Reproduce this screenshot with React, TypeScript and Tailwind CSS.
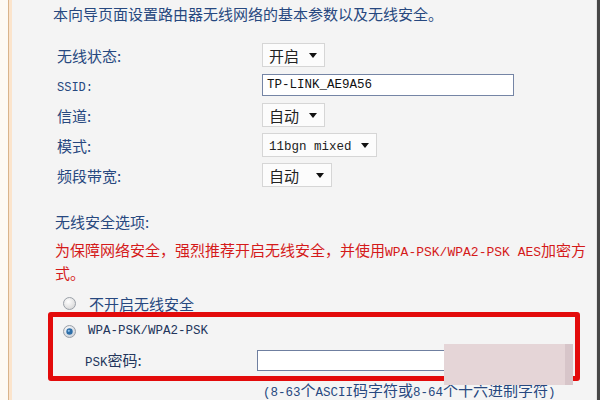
import React from "react";

const cjk = { fontFamily: '"Noto Sans CJK SC", "Noto Sans", sans-serif' };

function Mono({ children, size = "text-[12.5px]" }: { children: React.ReactNode; size?: string }) {
  return (
    <span className={size} style={{ fontFamily: '"Liberation Mono", "DejaVu Sans Mono", monospace' }}>
      {children}
    </span>
  );
}

function Arrow() {
  return (
    <svg width="8" height="5" viewBox="0 0 8 5" className="shrink-0">
      <path d="M0 0 H8 L4 5 Z" fill="#111" />
    </svg>
  );
}

function Select({ w, children }: { w: string; children: React.ReactNode }) {
  return (
    <div
      className={`${w} h-[24px] border border-[#d6d6d6] bg-[#fcfcfc] flex items-center justify-between pl-[6px] pr-[7px] text-[15px] text-[#222]`}
    >
      <span className="leading-none">{children}</span>
      <Arrow />
    </div>
  );
}

function Radio({ checked }: { checked?: boolean }) {
  return (
    <svg width="13" height="13" viewBox="0 0 13 13" className="shrink-0">
      <defs>
        <radialGradient id={checked ? "rgc" : "rgu"} cx="0.4" cy="0.35" r="0.7">
          <stop offset="0" stopColor="#ffffff" />
          <stop offset="1" stopColor={checked ? "#c9ced6" : "#d6d6d6"} />
        </radialGradient>
      </defs>
      <circle cx="6.5" cy="6.5" r="6" fill={`url(#${checked ? "rgc" : "rgu"})`} stroke="#9aa0a8" strokeWidth="1" />
      {checked && (
        <>
          <circle cx="6.5" cy="6.5" r="3.2" fill="#2d6ea8" />
          <circle cx="5.8" cy="5.8" r="1.1" fill="#8fc0ea" />
        </>
      )}
    </svg>
  );
}

function Row({ label, children }: { label: React.ReactNode; children: React.ReactNode }) {
  return (
    <div className="h-[30px] flex items-center">
      <div className="w-[250px] shrink-0 pl-[45px] text-[15px] leading-none text-[#27487f]">{label}</div>
      {children}
    </div>
  );
}

export default function App() {
  return (
    <div className="relative w-[600px] h-[400px] overflow-hidden flex bg-[#f4f4f4]" style={cjk}>
      <div className="w-[8px] bg-[#fdf9f3]" />
      <div className="w-px bg-[#d9b38a]" />
      <div className="w-[3px] bg-[#fbe4cc]" />
      <div className="flex-1 flex flex-col">
        <p className="mt-[4px] ml-[41px] text-[15px] leading-[20px] text-[#27487f] whitespace-nowrap">
          本向导页面设置路由器无线网络的基本参数以及无线安全。
        </p>
        <div className="mt-[16px] flex flex-col">
          <Row label="无线状态:">
            <Select w="w-[63px]">开启</Select>
          </Row>
          <Row label={<Mono size="text-[12px]">SSID:</Mono>}>
            <div className="w-[252px] h-[22px] border border-[#7585a5] bg-white flex items-center pl-[4px] text-[#111]">
              <Mono size="text-[12.5px]">TP-LINK_AE9A56</Mono>
            </div>
          </Row>
          <Row label="信道:">
            <Select w="w-[63px]">自动</Select>
          </Row>
          <Row label="模式:">
            <Select w="w-[115px]">
              <Mono size="text-[12.5px]">11bgn mixed</Mono>
            </Select>
          </Row>
          <Row label="频段带宽:">
            <Select w="w-[70px]">自动</Select>
          </Row>
        </div>
        <p className="mt-[22px] ml-[43px] text-[15px] leading-[20px] text-[#27487f]">无线安全选项:</p>
        <p className="mt-[8px] ml-[43px] text-[15px] leading-[20px] text-[#d41a1a] whitespace-nowrap">
          为保障网络安全，强烈推荐开启无线安全，并使用<Mono size="text-[13px]">WPA-PSK/WPA2-PSK AES</Mono>加密方
          <br />
          式。
        </p>
        <div className="mt-[13px] ml-[51px] h-[20px] flex items-center gap-[13px] text-[15px] text-[#27487f]">
          <Radio />
          <span className="leading-none">不开启无线安全</span>
        </div>
        <div className="mt-px ml-[36px] w-[532px] h-[69px] border-[5px] border-[#e30b0b] rounded-[3px] flex flex-col">
          <div className="h-[28px] pl-[10px] flex items-center gap-[12px] text-[#23365c]">
            <Radio checked />
            <Mono size="text-[12.5px]">WPA-PSK/WPA2-PSK</Mono>
          </div>
          <div className="h-[31px] pl-[32px] flex items-center">
            <div className="w-[172px] shrink-0 text-[15px] leading-none text-[#23365c]">
              <Mono size="text-[12.5px]">PSK</Mono>密码:
            </div>
            <div className="w-[210px] h-[21px] border border-[#6f7fa0] bg-white" />
          </div>
        </div>
        <p className="mt-0 ml-[251px] text-[15px] leading-[18px] text-[#27487f] whitespace-nowrap">
          <Mono>(8-63</Mono>个<Mono>ASCII</Mono>码字符或<Mono>8-64</Mono>个十六进制字符<Mono>)</Mono>
        </p>
      </div>
      <div className="w-px bg-[#e4e4e4]" />
      <div className="w-[3px] bg-[#474747]" />
      <div className="absolute left-[444px] top-[344px] w-[129px] h-[41px] flex">
        <div className="flex-1 bg-[#e5d5d7]" />
        <div className="w-[8px] bg-[#d7c5c9]" />
      </div>
    </div>
  );
}
